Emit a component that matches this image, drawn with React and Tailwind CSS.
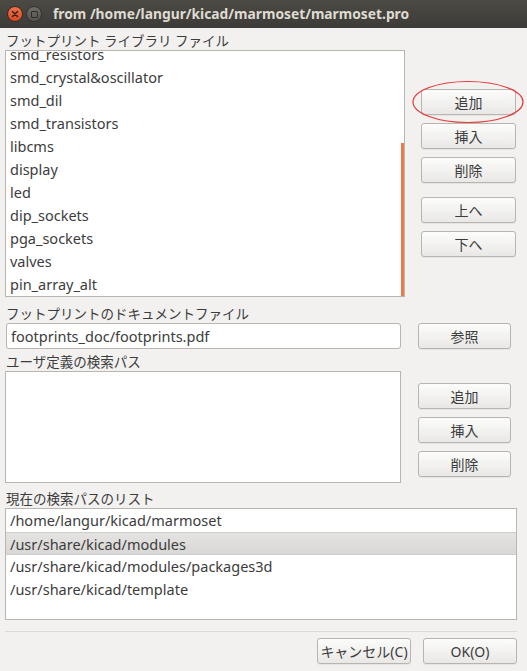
import React from 'react';

const libs = [
  'smd_resistors',
  'smd_crystal&oscillator',
  'smd_dil',
  'smd_transistors',
  'libcms',
  'display',
  'led',
  'dip_sockets',
  'pga_sockets',
  'valves',
  'pin_array_alt',
];

const paths = [
  '/home/langur/kicad/marmoset',
  '/usr/share/kicad/modules',
  '/usr/share/kicad/modules/packages3d',
  '/usr/share/kicad/template',
];

const Btn = ({ children, className = '' }) => (
  <button
    className={`h-[26px] rounded-[3px] border border-[#b8b4ae] bg-gradient-to-b from-[#fcfcfb] to-[#e9e8e6] text-[14px] text-[#3c3c3c] shadow-[0_1px_0_rgba(0,0,0,0.05)] ${className}`}
  >
    {children}
  </button>
);

const Label = ({ children, className = '' }) => (
  <div className={`h-[17px] leading-[17px] text-[13.5px] text-[#3c3c3c] pl-[6px] ${className}`}>{children}</div>
);

export default function App() {
  return (
    <div className="w-[527px] h-[671px] bg-[#f2f1f0] font-['Noto_Sans','Noto_Sans_CJK_JP',sans-serif] overflow-hidden">
      {/* title bar */}
      <div className="h-[28px] bg-gradient-to-b from-[#4b4a45] to-[#3c3b37] flex items-center">
        <div className="ml-[7px] w-[16px] h-[16px] rounded-full bg-gradient-to-b from-[#f0714a] to-[#d8481f] border border-[#3a2a22] flex items-center justify-center">
          <svg width="8" height="8" viewBox="0 0 8 8">
            <path d="M1.5 1.5 L6.5 6.5 M6.5 1.5 L1.5 6.5" stroke="#3b2016" strokeWidth="1.6" strokeLinecap="round" />
          </svg>
        </div>
        <div className="ml-[3px] w-[16px] h-[16px] rounded-full bg-gradient-to-b from-[#6e6d68] to-[#55544f] border border-[#33322e] flex items-center justify-center">
          <div className="w-[7px] h-[7px] border border-[#2e2d2a] rounded-[1px]" />
        </div>
        <div className="ml-[11px] text-[13.8px] font-bold text-[#dfdbd2]">
          from /home/langur/kicad/marmoset/marmoset.pro
        </div>
      </div>

      {/* library files */}
      <Label className="mt-[5px]">フットプリント ライブラリ ファイル</Label>
      <div className="flex">
        <div className="ml-[5px] w-[400px] h-[247px] border border-[#b9b6b1] bg-white overflow-hidden relative">
          <div className="-mt-[8px]">
            {libs.map((l) => (
              <div key={l} className="h-[23px] leading-[23px] pl-[4px] text-[14.5px] text-[#3c3c3c]">
                {l}
              </div>
            ))}
          </div>
          <div className="absolute right-0 top-[92px] w-[3px] h-[154px] bg-[#ed7a4b]" />
        </div>
        <div className="ml-[16px] mt-[39px] flex flex-col relative">
          <Btn className="w-[95px]">追加</Btn>
          <svg className="absolute -left-[9px] -top-[9px]" width="112" height="44" viewBox="0 0 112 44">
            <ellipse cx="56" cy="22" rx="55" ry="20.5" fill="none" stroke="#e3393a" strokeWidth="1.2" />
          </svg>
          <Btn className="w-[95px] mt-[8px]">挿入</Btn>
          <Btn className="w-[95px] mt-[8px]">削除</Btn>
          <Btn className="w-[95px] mt-[14px]">上へ</Btn>
          <Btn className="w-[95px] mt-[8px]">下へ</Btn>
        </div>
      </div>

      {/* doc file */}
      <Label className="mt-[9px]">フットプリントのドキュメントファイル</Label>
      <div className="flex items-center">
        <div className="ml-[6px] w-[395px] h-[26px] rounded-[3px] border border-[#b9b6b1] bg-white leading-[24px] pl-[4px] text-[14.5px] text-[#3c3c3c]">
          footprints_doc/footprints.pdf
        </div>
        <Btn className="ml-[17px] w-[93px]">参照</Btn>
      </div>

      {/* user search paths */}
      <Label className="mt-[5px]">ユーザ定義の検索パス</Label>
      <div className="flex">
        <div className="ml-[5px] w-[396px] h-[112px] border border-[#b9b6b1] bg-white" />
        <div className="ml-[17px] mt-[12px] flex flex-col">
          <Btn className="w-[93px]">追加</Btn>
          <Btn className="w-[93px] mt-[8px]">挿入</Btn>
          <Btn className="w-[93px] mt-[8px]">削除</Btn>
        </div>
      </div>

      {/* current list */}
      <Label className="mt-[8px]">現在の検索パスのリスト</Label>
      <div className="ml-[5px] w-[512px] h-[112px] border border-[#b9b6b1] bg-white overflow-hidden">
        {paths.map((p, i) => (
          <div
            key={p}
            className={`h-[23px] leading-[23px] pl-[4px] text-[14.5px] text-[#3c3c3c] ${
              i === 1 ? 'bg-gradient-to-b from-[#e4e3e1] to-[#d9d8d6] border-y border-[#cfcdca] leading-[21px]' : ''
            }`}
          >
            {p}
          </div>
        ))}
      </div>

      <div className="ml-[5px] w-[512px] h-px bg-[#dcdad6] mt-[11px]" />

      <div className="flex justify-end mt-[6px] pr-[10px] gap-[12px]">
        <Btn className="w-[94px]">キャンセル(C)</Btn>
        <Btn className="w-[94px]">OK(O)</Btn>
      </div>
    </div>
  );
}
